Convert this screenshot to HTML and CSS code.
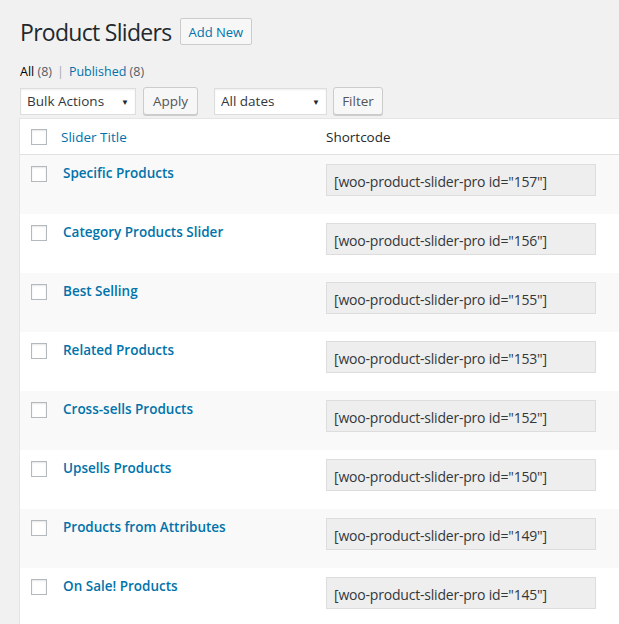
FILE: index.html
```html
<!DOCTYPE html>
<html>
<head>
<meta charset="utf-8">
<link rel="stylesheet" href="styles.css">
</head>
<body>
<div class="wrap">
  <div class="heading">
    <h1 class="title">Product Sliders</h1>
    <a class="add-new">Add New</a>
  </div>
  <ul class="subsub">
    <li class="current">All <span class="count">(8)</span></li>
    <li class="sep">|</li>
    <li><a>Published <span class="count">(8)</span></a></li>
  </ul>
  <div class="tablenav">
    <div class="select bulk">Bulk Actions<span class="arrow">▼</span></div>
    <div class="btn apply">Apply</div>
    <div class="select dates">All dates<span class="arrow">▼</span></div>
    <div class="btn filter">Filter</div>
  </div>
  <div class="table">
    <div class="row head">
      <div class="cb"><span class="box"></span></div>
      <div class="col-title"><a>Slider Title</a></div>
      <div class="col-code">Shortcode</div>
    </div>
    <div class="row alt">
      <div class="cb"><span class="box"></span></div>
      <div class="col-title"><a class="name">Specific Products</a></div>
      <div class="col-code"><div class="code">[woo-product-slider-pro id="157"]</div></div>
    </div>
    <div class="row">
      <div class="cb"><span class="box"></span></div>
      <div class="col-title"><a class="name">Category Products Slider</a></div>
      <div class="col-code"><div class="code">[woo-product-slider-pro id="156"]</div></div>
    </div>
    <div class="row alt">
      <div class="cb"><span class="box"></span></div>
      <div class="col-title"><a class="name">Best Selling</a></div>
      <div class="col-code"><div class="code">[woo-product-slider-pro id="155"]</div></div>
    </div>
    <div class="row">
      <div class="cb"><span class="box"></span></div>
      <div class="col-title"><a class="name">Related Products</a></div>
      <div class="col-code"><div class="code">[woo-product-slider-pro id="153"]</div></div>
    </div>
    <div class="row alt">
      <div class="cb"><span class="box"></span></div>
      <div class="col-title"><a class="name">Cross-sells Products</a></div>
      <div class="col-code"><div class="code">[woo-product-slider-pro id="152"]</div></div>
    </div>
    <div class="row">
      <div class="cb"><span class="box"></span></div>
      <div class="col-title"><a class="name">Upsells Products</a></div>
      <div class="col-code"><div class="code">[woo-product-slider-pro id="150"]</div></div>
    </div>
    <div class="row alt">
      <div class="cb"><span class="box"></span></div>
      <div class="col-title"><a class="name">Products from Attributes</a></div>
      <div class="col-code"><div class="code">[woo-product-slider-pro id="149"]</div></div>
    </div>
    <div class="row">
      <div class="cb"><span class="box"></span></div>
      <div class="col-title"><a class="name">On Sale! Products</a></div>
      <div class="col-code"><div class="code">[woo-product-slider-pro id="145"]</div></div>
    </div>
  </div>
</div>
</body>
</html>
```

FILE: styles.css
```css
* { box-sizing: border-box; }
html, body { margin: 0; padding: 0; }
body {
  background: #f1f1f1;
  font-family: "Open Sans", "Noto Sans", sans-serif;
  font-size: 13px;
  color: #23282d;
  overflow: hidden;
}
.wrap { padding: 0 0 0 19px; width: 640px; }
.heading {
  display: flex;
  align-items: center;
  height: 62px;
  padding-top: 1px;
}
.title {
  margin: 0 0 0 1px;
  font-size: 23px;
  font-weight: 400;
  color: #23282d;
  letter-spacing: -0.7px;
}
.add-new {
  margin-left: 8px;
  height: 27px;
  padding: 0 8px;
  display: flex;
  align-items: center;
  border: 1px solid #ccc;
  border-radius: 2px;
  background: #f7f7f7;
  color: #0073aa;
  font-size: 13px;
}
.subsub {
  list-style: none;
  margin: 0 0 0 1px;
  padding: 0;
  display: flex;
  height: 18px;
  align-items: center;
  font-size: 12.5px;
  color: #555d66;
}
.subsub li { margin-right: 5px; }
.subsub .current { color: #000; font-weight: 400; }
.subsub .count { color: #555d66; }
.subsub a { color: #0073aa; }
.subsub a .count { color: #555d66; }
.subsub .sep { color: #aaa; }
.tablenav {
  display: flex;
  align-items: center;
  height: 32px;
  margin-top: 5px;
  padding-left: 1px;
}
.select {
  height: 27px;
  background: #fff;
  border: 1px solid #ddd;
  box-shadow: inset 0 1px 2px rgba(0,0,0,.07);
  display: flex;
  align-items: center;
  padding: 0 6px;
  color: #32373c;
  font-size: 13.5px;
  position: relative;
}
.select .arrow {
  margin-left: auto;
  font-size: 8px;
  color: #23282d;
}
.bulk { width: 116px; }
.dates { width: 113px; margin-left: 16px; }
.btn {
  height: 28px;
  border: 1px solid #ccc;
  border-radius: 3px;
  background: #f7f7f7;
  box-shadow: 0 1px 0 #ccc;
  display: flex;
  align-items: center;
  padding: 0 10px;
  color: #555;
  font-size: 13.5px;
  margin-top: -1px;
}
.apply { margin-left: 7px; width: 55px; justify-content: center; }
.filter { margin-left: 6px; width: 50px; justify-content: center; }
.table {
  margin-top: 1px;
  border: 1px solid #e5e5e5;
  border-right: none;
  background: #fff;
}
.row {
  display: flex;
  height: 59px;
  background: #fff;
}
.row.alt { background: #f9f9f9; }
.row.head {
  height: 36px;
  border-bottom: 1px solid #e1e1e1;
  align-items: center;
  font-size: 13.5px;
}
.cb { width: 42px; padding-left: 11px; }
.row:not(.head) .cb { padding-top: 11px; }
.box {
  display: block;
  width: 16px;
  height: 16px;
  border: 1px solid #b4b9be;
  background: #fff;
  box-shadow: inset 0 1px 2px rgba(0,0,0,.1);
}
.col-title { width: 264px; }
.row.head .col-title { margin-left: -1px; width: 264px; }
.row.head .col-title a { color: #0073aa; }
.row:not(.head) .col-title { padding: 9px 0 0 1px; width: 264px; }
.name {
  color: #0073aa;
  font-weight: 600;
  font-size: 13.5px;
}
.col-code { flex: 1; }
.row.head .col-code { margin-left: 1px; }
.row:not(.head) .col-code { padding: 9px 0 0 0; }
.code {
  width: 270px;
  height: 32px;
  background: #eee;
  border: 1px solid #ddd;
  display: flex;
  align-items: center;
  padding: 2px 0 0 7px;
  color: #32373c;
  font-size: 14px;
  letter-spacing: -0.2px;
}
```
